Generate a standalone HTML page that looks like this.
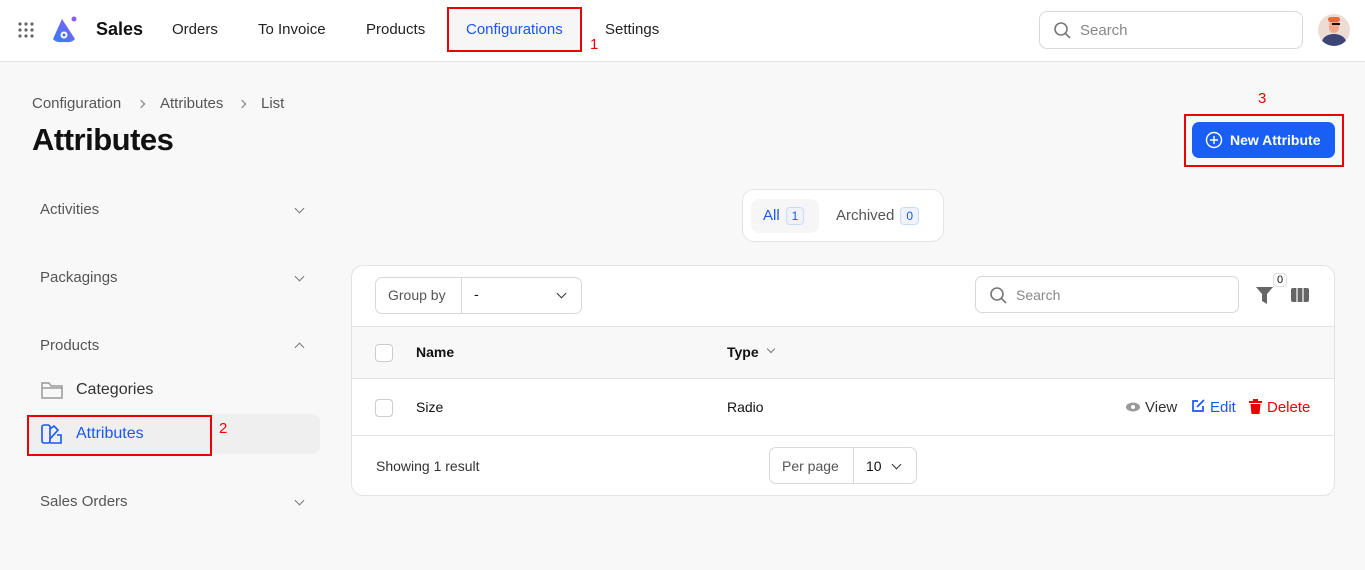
<!DOCTYPE html>
<html><head><meta charset="utf-8"><style>
*{box-sizing:border-box;margin:0;padding:0}
body{width:1365px;height:570px;background:#f8f8f8;font-family:"Liberation Sans",sans-serif;color:#111;position:relative;overflow:hidden;font-size:14px}
.a{position:absolute}
.top{left:0;top:0;width:1365px;height:62px;background:#fff;border-bottom:1px solid #e5e5e5}
.nav{font-size:15px;color:#222;top:21px}
.red{border:2px solid #e00;position:absolute}
.rn{color:#e00;font-size:15px;position:absolute}
.side{font-size:15px;color:#555;left:40px}
.chev{position:absolute;left:296px;width:7px;height:7px;border-right:1.5px solid #777;border-bottom:1.5px solid #777;transform:rotate(45deg)}
.card{background:#fff;border:1px solid #e3e3e3;border-radius:12px}
.cb{width:18px;height:18px;border:1px solid #ccc;border-radius:4px;position:absolute;background:#fff}
.badge{display:inline-block;border:1px solid #c9dafc;background:#eef3ff;color:#1a56f0;border-radius:4px;font-size:12px;padding:1px 5px;margin-left:6px}
.bc{top:95px;color:#555;font-size:15px}
.bcs{position:absolute;top:101px;width:6px;height:6px;border-right:1.5px solid #777;border-top:1.5px solid #777;transform:rotate(45deg)}
</style></head><body>
<div class="a top"></div>
<svg class="a" style="left:18px;top:22px" width="16" height="16"><g fill="#666"><circle cx="2" cy="2" r="1.6"/><circle cx="8" cy="2" r="1.6"/><circle cx="14" cy="2" r="1.6"/><circle cx="2" cy="8" r="1.6"/><circle cx="8" cy="8" r="1.6"/><circle cx="14" cy="8" r="1.6"/><circle cx="2" cy="14" r="1.6"/><circle cx="8" cy="14" r="1.6"/><circle cx="14" cy="14" r="1.6"/></g></svg>
<svg class="a" style="left:50px;top:15px" width="30" height="30"><defs><linearGradient id="g" x1="0" y1="1" x2="1" y2="0"><stop offset="0" stop-color="#2f7ff5"/><stop offset="1" stop-color="#8b5cf6"/></linearGradient></defs><path d="M12 4 L3 24 Q6 28 14 27 Q22 28 25 24 Z" fill="url(#g)"/><circle cx="14" cy="20" r="3.5" fill="#fff"/><circle cx="14" cy="20" r="1.5" fill="#4b6ef5"/><circle cx="24" cy="4" r="2.5" fill="#8b5cf6"/></svg>
<div class="a" style="left:96px;top:19px;font-size:18px;font-weight:bold">Sales</div>
<div class="a nav" style="left:172px">Orders</div>
<div class="a nav" style="left:258px">To Invoice</div>
<div class="a nav" style="left:366px">Products</div>
<div class="a" style="left:449px;top:8px;width:131px;height:42px;background:#f6f6f6"></div>
<div class="a nav" style="left:466px;color:#1a56f0">Configurations</div>
<div class="red" style="left:447px;top:7px;width:135px;height:45px"></div>
<div class="rn" style="left:590px;top:36px">1</div>
<div class="a nav" style="left:605px">Settings</div>
<div class="a" style="left:1039px;top:11px;width:264px;height:38px;border:1px solid #d8d8d8;border-radius:8px;background:#fff"></div>
<svg class="a" style="left:1053px;top:21px" width="18" height="18" fill="none" stroke="#777" stroke-width="1.6"><circle cx="8" cy="8" r="6"/><path d="M12.5 12.5 L17 17"/></svg>
<div class="a" style="left:1080px;top:22px;color:#888;font-size:15px">Search</div>
<div class="a" style="left:1318px;top:14px;width:32px;height:32px;border-radius:50%;background:#ecdcd4;overflow:hidden"><div style="position:absolute;left:4px;top:20px;width:24px;height:16px;border-radius:50%;background:#3d4577"></div><div style="position:absolute;left:11px;top:6px;width:10px;height:13px;border-radius:5px;background:#f2a98a"></div><div style="position:absolute;left:10px;top:3px;width:12px;height:5px;border-radius:4px;background:#e86a3a"></div><div style="position:absolute;left:14px;top:9px;width:8px;height:2px;background:#111"></div></div>

<div class="a bc" style="left:32px">Configuration</div>
<div class="bcs" style="left:138px"></div>
<div class="a bc" style="left:160px">Attributes</div>
<div class="bcs" style="left:239px"></div>
<div class="a bc" style="left:261px">List</div>
<div class="a" style="left:32px;top:122px;font-size:31px;font-weight:bold;letter-spacing:-0.5px">Attributes</div>
<div class="rn" style="left:1258px;top:90px">3</div>
<div class="a" style="left:1192px;top:122px;width:143px;height:36px;background:#1a5ff5;border-radius:7px;color:#fff;font-weight:bold;font-size:14px;padding:10px 0 0 38px">New Attribute</div>
<svg class="a" style="left:1205px;top:131px" width="18" height="18" fill="none" stroke="#fff" stroke-width="1.4"><circle cx="9" cy="9" r="7.5"/><path d="M9 5v8M5 9h8"/></svg>
<div class="red" style="left:1184px;top:114px;width:160px;height:53px"></div>

<div class="a side" style="top:201px">Activities</div><div class="chev" style="top:205px"></div>
<div class="a side" style="top:269px">Packagings</div><div class="chev" style="top:273px"></div>
<div class="a side" style="top:337px">Products</div><div class="chev" style="top:344px;transform:rotate(-135deg)"></div>
<svg class="a" style="left:40px;top:380px" width="24" height="20" fill="none" stroke="#999" stroke-width="1.5"><path d="M2 3h7l2 3h11v12H2z M2 8h20"/></svg>
<div class="a" style="left:76px;top:381px;font-size:16px;color:#333">Categories</div>
<div class="a" style="left:28px;top:414px;width:292px;height:40px;background:#efefef;border-radius:8px"></div>
<svg class="a" style="left:41px;top:424px" width="22" height="20" fill="none" stroke="#1a56f0" stroke-width="1.6"><rect x="1" y="1" width="8" height="18" rx="2"/><path d="M9 5l4-3 4 4-8 9M9 19h11V11h-4"/></svg>
<div class="a" style="left:76px;top:425px;font-size:16px;color:#1a56f0">Attributes</div>
<div class="red" style="left:27px;top:415px;width:185px;height:41px"></div>
<div class="rn" style="left:219px;top:420px">2</div>
<div class="a side" style="top:493px">Sales Orders</div><div class="chev" style="top:497px"></div>

<div class="a card" style="left:742px;top:189px;width:202px;height:53px"></div>
<div class="a" style="left:751px;top:199px;width:68px;height:34px;background:#f6f6f6;border-radius:8px"></div>
<div class="a" style="left:763px;top:207px;color:#1a56f0;font-size:15px">All<span class="badge">1</span></div>
<div class="a" style="left:836px;top:207px;color:#555;font-size:15px">Archived<span class="badge">0</span></div>

<div class="a card" style="left:351px;top:265px;width:984px;height:231px;overflow:hidden">
 <div class="a" style="left:0;top:60px;width:984px;height:53px;background:#f8f8f8;border-top:1px solid #e3e3e3;border-bottom:1px solid #e3e3e3"></div>
 <div class="a" style="left:0;top:169px;width:984px;border-top:1px solid #e3e3e3"></div>
</div>
<div class="a" style="left:375px;top:277px;width:207px;height:37px;border:1px solid #d8d8d8;border-radius:7px;background:#fff"></div>
<div class="a" style="left:461px;top:278px;height:35px;border-left:1px solid #d8d8d8"></div>
<div class="a" style="left:388px;top:287px;color:#555">Group by</div>
<div class="a" style="left:474px;top:286px">-</div>
<div class="chev" style="left:558px;top:290px;border-color:#333"></div>
<div class="a" style="left:975px;top:276px;width:264px;height:37px;border:1px solid #d8d8d8;border-radius:7px;background:#fff"></div>
<svg class="a" style="left:989px;top:286px" width="18" height="18" fill="none" stroke="#777" stroke-width="1.6"><circle cx="8" cy="8" r="6"/><path d="M12.5 12.5 L17 17"/></svg>
<div class="a" style="left:1016px;top:287px;color:#888">Search</div>
<svg class="a" style="left:1256px;top:287px" width="18" height="17"><path d="M0 0h17l-6 7v10l-5-3V7z" fill="#666"/></svg>
<div class="a" style="left:1273px;top:273px;font-size:11px;border:1px solid #ddd;border-radius:4px;background:#fff;padding:0 3px">0</div>
<svg class="a" style="left:1291px;top:288px" width="18" height="14"><rect x="0" y="0" width="18" height="14" rx="2" fill="#666"/><path d="M6 0v14M12 0v14" stroke="#fff" stroke-width="1.2"/></svg>

<div class="cb" style="left:375px;top:344px"></div>
<div class="a" style="left:416px;top:344px;font-weight:bold">Name</div>
<div class="a" style="left:727px;top:344px;font-weight:bold">Type</div>
<div class="chev" style="left:768px;top:346px;width:6px;height:6px"></div>
<div class="cb" style="left:375px;top:399px"></div>
<div class="a" style="left:416px;top:399px">Size</div>
<div class="a" style="left:727px;top:399px">Radio</div>
<svg class="a" style="left:1126px;top:402px" width="14" height="10"><ellipse cx="7" cy="5" rx="7" ry="4.5" fill="#999"/><circle cx="7" cy="5" r="2" fill="#fff"/></svg>
<div class="a" style="left:1145px;top:399px;color:#333;font-size:15px">View</div>
<svg class="a" style="left:1191px;top:399px" width="14" height="14" fill="none" stroke="#1a56f0" stroke-width="1.7"><path d="M7 2H2v10h10V7"/><path d="M6 8l7-7"/></svg>
<div class="a" style="left:1210px;top:399px;color:#1a56f0;font-size:15px">Edit</div>
<svg class="a" style="left:1249px;top:399px" width="13" height="15" fill="#e00"><rect x="0" y="2" width="13" height="2"/><rect x="4" y="0" width="5" height="2"/><path d="M1.5 5h10l-1 10h-8z"/></svg>
<div class="a" style="left:1267px;top:399px;color:#e00;font-size:15px">Delete</div>

<div class="a" style="left:376px;top:458px;color:#333">Showing 1 result</div>
<div class="a" style="left:769px;top:447px;width:148px;height:37px;border:1px solid #d8d8d8;border-radius:7px;background:#fff"></div>
<div class="a" style="left:853px;top:448px;height:35px;border-left:1px solid #d8d8d8"></div>
<div class="a" style="left:782px;top:458px;color:#555">Per page</div>
<div class="a" style="left:866px;top:458px">10</div>
<div class="chev" style="left:893px;top:461px;border-color:#333"></div>
</body></html>
